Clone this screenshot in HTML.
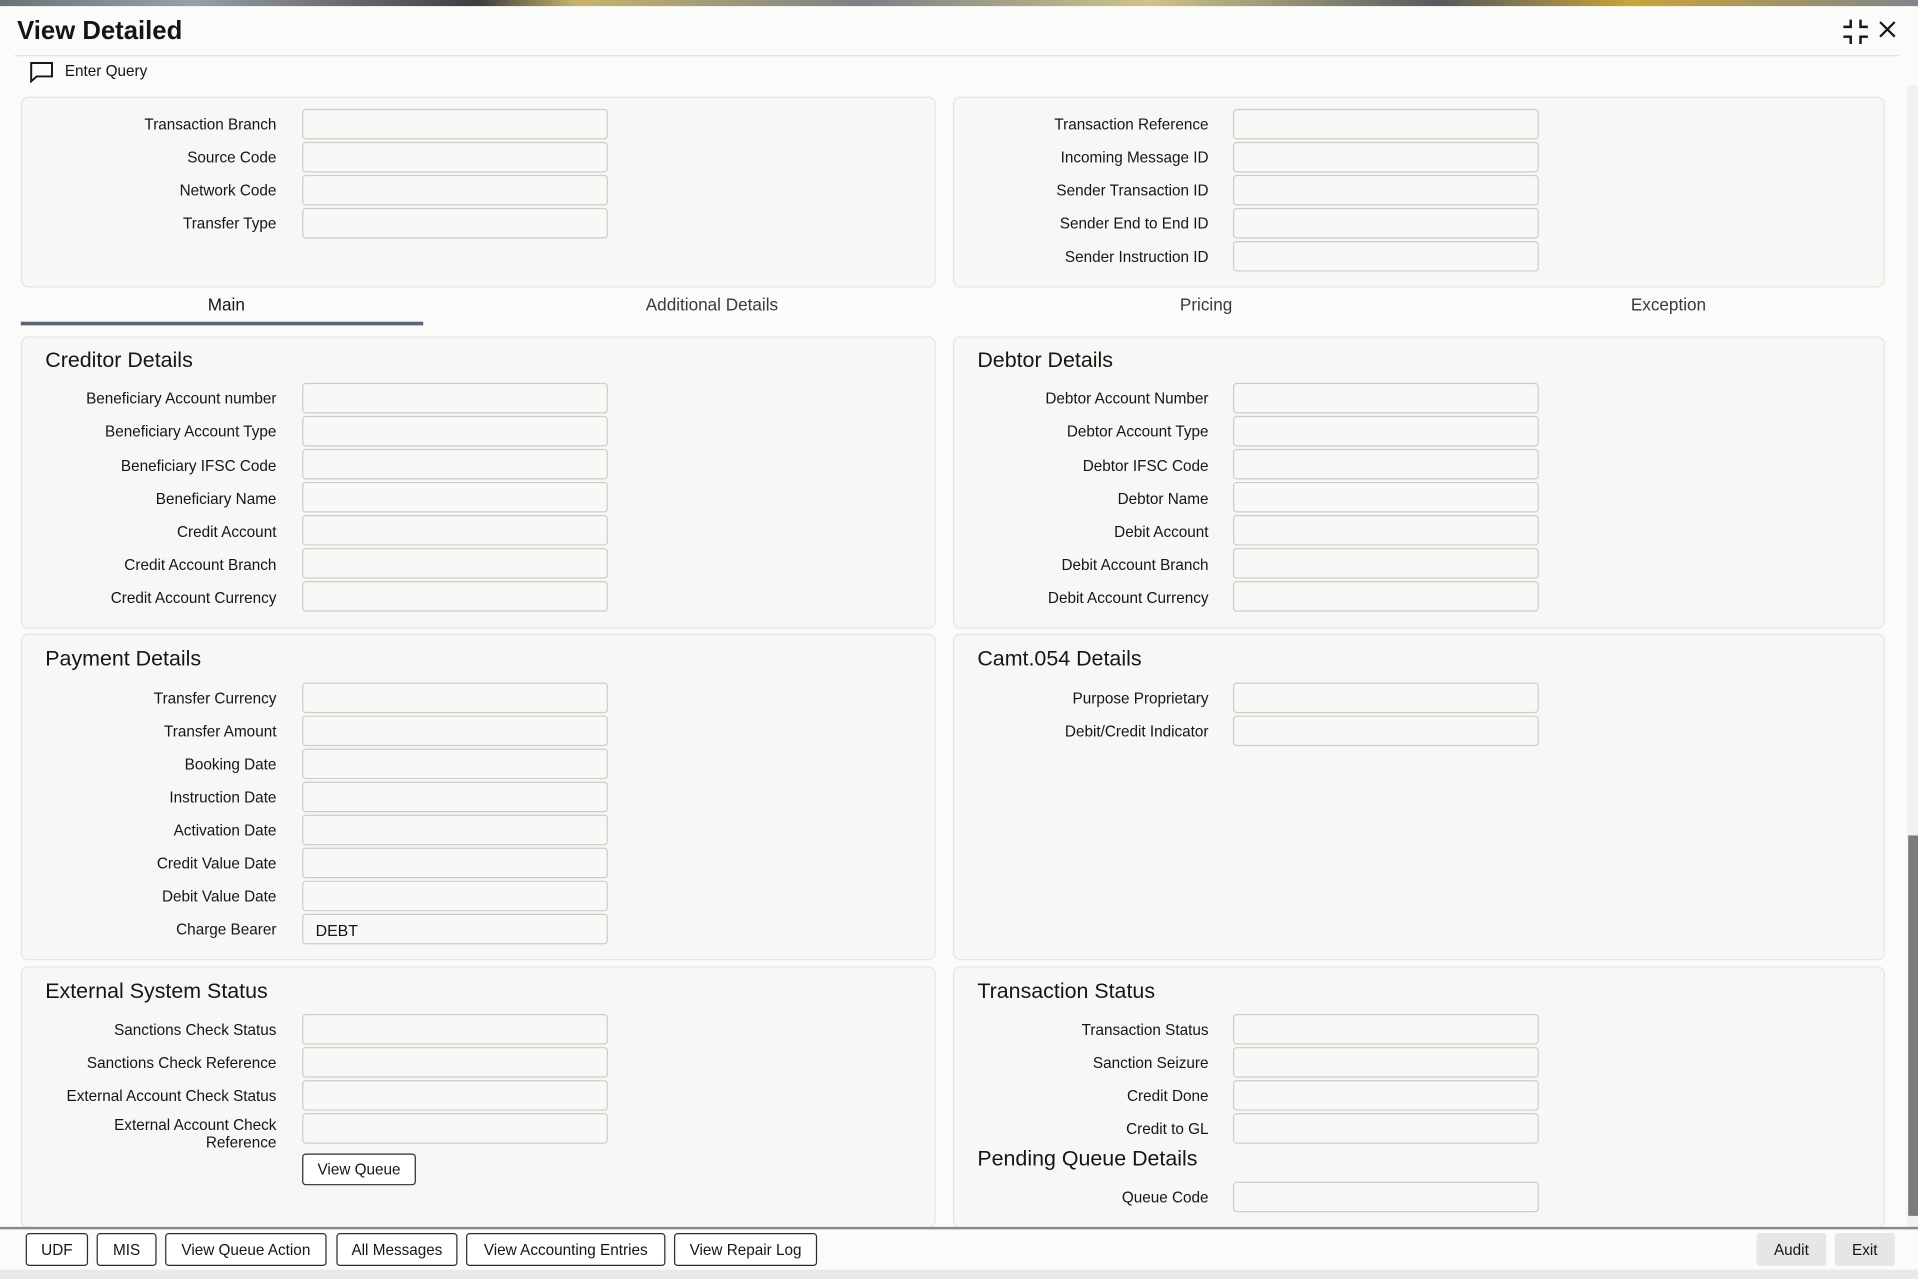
<!DOCTYPE html>
<html><head><meta charset="utf-8">
<style>
html,body{margin:0;padding:0;width:1918px;height:1279px;overflow:hidden;background:#fbfbfa;}
#w{position:absolute;left:0;top:0;width:1568px;height:1046px;transform:scale(1.22321);transform-origin:0 0;font-family:"Liberation Sans",sans-serif;color:#161513;}
.a{position:absolute;}
.p{position:absolute;background:#f8f7f5;border:1px solid #e7e5e1;border-radius:6px;box-sizing:border-box;}
.l{position:absolute;font-size:12.5px;text-align:right;white-space:nowrap;line-height:14px;}
.i{position:absolute;width:250px;height:25px;box-sizing:border-box;border:1px solid #cfcdca;border-radius:3px;background:#f9f8f6;}
.h{position:absolute;font-size:17.5px;white-space:nowrap;}
.t{position:absolute;font-size:14px;color:#3a3936;transform:translateX(-50%);white-space:nowrap;}
.b{position:absolute;top:1008px;height:27px;box-sizing:border-box;border:1px solid #2d2c2a;border-radius:3px;background:#fff;font-size:12.5px;display:flex;align-items:center;justify-content:center;white-space:nowrap;}
</style></head><body><div id="w">
<div class="a" style="left:0;top:0;width:1568px;height:5px;background:linear-gradient(90deg,#6d7279,#9aa0a8 10%,#3b3d40 25%,#c8b46a 30%,#7b8088 45%,#d0c48a 60%,#55595e 75%,#c9a43a 85%,#80858c);"></div>
<div class="a" style="left:14px;top:14px;font-size:21px;font-weight:bold;">View Detailed</div>
<svg class="a" style="left:1506px;top:15px" width="22" height="22" viewBox="0 0 22 22" fill="none" stroke="#161513" stroke-width="2"><path d="M7 1v6H1M15 1v6h6M7 21v-6H1M15 21v-6h6"/></svg>
<svg class="a" style="left:1536px;top:17px" width="14" height="14" viewBox="0 0 14 14" stroke="#161513" stroke-width="1.8"><path d="M1 1l12 12M13 1L1 13"/></svg>
<div class="a" style="left:12px;top:45px;width:1540px;height:1px;background:#e3e1dd;"></div>
<svg class="a" style="left:24px;top:50px" width="20" height="18" viewBox="0 0 20 18" fill="none" stroke="#161513" stroke-width="1.6"><path d="M1.5 1.5h17v11H6l-4.5 4z"/></svg>
<div class="a" style="left:53px;top:51px;font-size:12.5px;">Enter Query</div>

<div class="p" style="left:17px;top:79px;width:748px;height:156px;"></div>
<div class="p" style="left:779px;top:79px;width:762px;height:156px;"></div>
<div class="p" style="left:17px;top:275px;width:748px;height:239px;"></div>
<div class="p" style="left:779px;top:275px;width:762px;height:239px;"></div>
<div class="p" style="left:17px;top:518px;width:748px;height:267px;"></div>
<div class="p" style="left:779px;top:518px;width:762px;height:267px;"></div>
<div class="p" style="left:17px;top:790px;width:748px;height:214px;"></div>
<div class="p" style="left:779px;top:790px;width:762px;height:214px;"></div>

<div class="l" style="right:1342px;top:95px">Transaction Branch</div><div class="i" style="left:247px;top:89px"></div>
<div class="l" style="right:1342px;top:122px">Source Code</div><div class="i" style="left:247px;top:116px"></div>
<div class="l" style="right:1342px;top:149px">Network Code</div><div class="i" style="left:247px;top:143px"></div>
<div class="l" style="right:1342px;top:176px">Transfer Type</div><div class="i" style="left:247px;top:170px"></div>
<div class="l" style="right:580px;top:95px">Transaction Reference</div><div class="i" style="left:1008px;top:89px"></div>
<div class="l" style="right:580px;top:122px">Incoming Message ID</div><div class="i" style="left:1008px;top:116px"></div>
<div class="l" style="right:580px;top:149px">Sender Transaction ID</div><div class="i" style="left:1008px;top:143px"></div>
<div class="l" style="right:580px;top:176px">Sender End to End ID</div><div class="i" style="left:1008px;top:170px"></div>
<div class="l" style="right:580px;top:203px">Sender Instruction ID</div><div class="i" style="left:1008px;top:197px"></div>

<div class="t" style="left:185px;top:241px;color:#161513">Main</div>
<div class="t" style="left:582px;top:241px">Additional Details</div>
<div class="t" style="left:986px;top:241px">Pricing</div>
<div class="t" style="left:1364px;top:241px">Exception</div>
<div class="a" style="left:17px;top:263px;width:329px;height:3px;background:#5b6476;"></div>

<div class="h" style="left:37px;top:284px">Creditor Details</div>
<div class="l" style="right:1342px;top:319px">Beneficiary Account number</div><div class="i" style="left:247px;top:313px"></div>
<div class="l" style="right:1342px;top:346px">Beneficiary Account Type</div><div class="i" style="left:247px;top:340px"></div>
<div class="l" style="right:1342px;top:374px">Beneficiary IFSC Code</div><div class="i" style="left:247px;top:367px"></div>
<div class="l" style="right:1342px;top:401px">Beneficiary Name</div><div class="i" style="left:247px;top:394px"></div>
<div class="l" style="right:1342px;top:428px">Credit Account</div><div class="i" style="left:247px;top:421px"></div>
<div class="l" style="right:1342px;top:455px">Credit Account Branch</div><div class="i" style="left:247px;top:448px"></div>
<div class="l" style="right:1342px;top:482px">Credit Account Currency</div><div class="i" style="left:247px;top:475px"></div>
<div class="h" style="left:799px;top:284px">Debtor Details</div>
<div class="l" style="right:580px;top:319px">Debtor Account Number</div><div class="i" style="left:1008px;top:313px"></div>
<div class="l" style="right:580px;top:346px">Debtor Account Type</div><div class="i" style="left:1008px;top:340px"></div>
<div class="l" style="right:580px;top:374px">Debtor IFSC Code</div><div class="i" style="left:1008px;top:367px"></div>
<div class="l" style="right:580px;top:401px">Debtor Name</div><div class="i" style="left:1008px;top:394px"></div>
<div class="l" style="right:580px;top:428px">Debit Account</div><div class="i" style="left:1008px;top:421px"></div>
<div class="l" style="right:580px;top:455px">Debit Account Branch</div><div class="i" style="left:1008px;top:448px"></div>
<div class="l" style="right:580px;top:482px">Debit Account Currency</div><div class="i" style="left:1008px;top:475px"></div>

<div class="h" style="left:37px;top:528px">Payment Details</div>
<div class="l" style="right:1342px;top:564px">Transfer Currency</div><div class="i" style="left:247px;top:558px"></div>
<div class="l" style="right:1342px;top:591px">Transfer Amount</div><div class="i" style="left:247px;top:585px"></div>
<div class="l" style="right:1342px;top:618px">Booking Date</div><div class="i" style="left:247px;top:612px"></div>
<div class="l" style="right:1342px;top:645px">Instruction Date</div><div class="i" style="left:247px;top:639px"></div>
<div class="l" style="right:1342px;top:672px">Activation Date</div><div class="i" style="left:247px;top:666px"></div>
<div class="l" style="right:1342px;top:699px">Credit Value Date</div><div class="i" style="left:247px;top:693px"></div>
<div class="l" style="right:1342px;top:726px">Debit Value Date</div><div class="i" style="left:247px;top:720px"></div>
<div class="l" style="right:1342px;top:753px">Charge Bearer</div><div class="i" style="left:247px;top:747px;font-size:13px;padding:5px 0 0 10px;">DEBT</div>
<div class="h" style="left:799px;top:528px">Camt.054 Details</div>
<div class="l" style="right:580px;top:564px">Purpose Proprietary</div><div class="i" style="left:1008px;top:558px"></div>
<div class="l" style="right:580px;top:591px">Debit/Credit Indicator</div><div class="i" style="left:1008px;top:585px"></div>

<div class="h" style="left:37px;top:800px">External System Status</div>
<div class="l" style="right:1342px;top:835px">Sanctions Check Status</div><div class="i" style="left:247px;top:829px"></div>
<div class="l" style="right:1342px;top:862px">Sanctions Check Reference</div><div class="i" style="left:247px;top:856px"></div>
<div class="l" style="right:1342px;top:889px">External Account Check Status</div><div class="i" style="left:247px;top:883px"></div>
<div class="l" style="right:1342px;top:913px">External Account Check<br>Reference</div><div class="i" style="left:247px;top:910px"></div>
<div class="a" style="left:247px;top:943px;width:93px;height:26px;box-sizing:border-box;border:1px solid #2d2c2a;border-radius:3px;background:#fff;font-size:12.5px;display:flex;align-items:center;justify-content:center;">View Queue</div>
<div class="h" style="left:799px;top:800px">Transaction Status</div>
<div class="l" style="right:580px;top:835px">Transaction Status</div><div class="i" style="left:1008px;top:829px"></div>
<div class="l" style="right:580px;top:862px">Sanction Seizure</div><div class="i" style="left:1008px;top:856px"></div>
<div class="l" style="right:580px;top:889px">Credit Done</div><div class="i" style="left:1008px;top:883px"></div>
<div class="l" style="right:580px;top:916px">Credit to GL</div><div class="i" style="left:1008px;top:910px"></div>
<div class="h" style="left:799px;top:937px">Pending Queue Details</div>
<div class="l" style="right:580px;top:972px">Queue Code</div><div class="i" style="left:1008px;top:966px"></div>

<div class="a" style="left:1559px;top:70px;width:9px;height:934px;background:#f1f1f1;"></div>
<div class="a" style="left:1560px;top:683px;width:8px;height:311px;background:#7b7b7b;"></div>

<div class="a" style="left:0;top:1003px;width:1568px;height:2px;background:#8a8a8a;"></div>
<div class="b" style="left:21px;width:51px">UDF</div>
<div class="b" style="left:79px;width:49px">MIS</div>
<div class="b" style="left:135px;width:132px">View Queue Action</div>
<div class="b" style="left:275px;width:99px">All Messages</div>
<div class="b" style="left:381px;width:163px">View Accounting Entries</div>
<div class="b" style="left:551px;width:117px">View Repair Log</div>
<div class="b" style="left:1436px;width:57px;border:none;background:#e6e6e6">Audit</div>
<div class="b" style="left:1500px;width:49px;border:none;background:#e6e6e6">Exit</div>
<div class="a" style="left:0;top:1038px;width:1568px;height:8px;background:#e9e9e9;"></div>
</div></body></html>
